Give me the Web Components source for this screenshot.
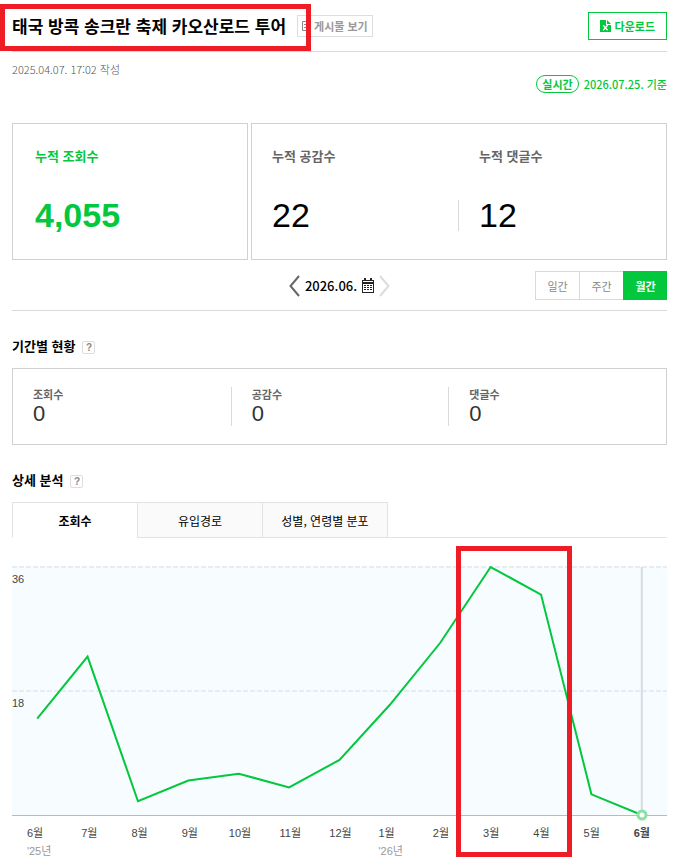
<!DOCTYPE html>
<html lang="ko">
<head>
<meta charset="utf-8">
<meta name="viewport" content="width=device-width, initial-scale=1">
<title>게시물 통계</title>
<style>
  body {
    margin: 0;
    background: #ffffff;
    color: #000000;
    font-family: "Noto Sans CJK KR", sans-serif;
    font-size: 12px;
    --green: #03c73c;
    --line: #d9d9d9;
    --mark: #ee1c25;
  }
</style>
</head>
<body>
<post-stats></post-stats>

<script>
// Base class: clones the markup into an open shadow root
class BaseElement extends HTMLElement {
  constructor() {
    super();
    this._sR = this.attachShadow({ mode: 'open' });
    const template = document.createElement('template');
    template.innerHTML = this.constructor.markup;
    this._sR.appendChild(template.content.cloneNode(true));
  }
}

class PostHeader extends BaseElement {
  static markup = `
    <style>
      :host {
        display: flex;
        align-items: center;
        height: 51px;
        border-bottom: 1px solid var(--line);
      }

      .title {
        position: relative;
        margin: 0;
        font-size: 17px;
        line-height: 28px;
        white-space: nowrap;
      }

      .mark {
        position: absolute;
        inset: -8px -25px -11px -12px;
        border: 5px solid var(--mark);
        pointer-events: none;
        z-index: 1;
      }

      .view {
        display: flex;
        align-items: center;
        gap: 3px;
        height: 20px;
        margin-left: 11px;
        padding: 0 4px;
        border: 1px solid #dddddd;
        color: #999999;
        font-size: 11px;
        font-weight: bold;
        text-decoration: none;
        white-space: nowrap;
      }

      .download {
        display: flex;
        align-items: center;
        gap: 4px;
        height: 28px;
        margin: 0 0 0 auto;
        padding: 0 11px;
        border: 1px solid var(--green);
        background: #ffffff;
        color: var(--green);
        font: bold 11px "Noto Sans CJK KR", sans-serif;
      }
    </style>
    <h1 class="title"><slot></slot><span class="mark"></span></h1>
    <a class="view" href="#">
      <svg width="9" height="10" viewBox="0 0 9 10" fill="none" stroke="#888888">
        <path d="M.5.5h8v9h-8zM2 3.5h5M2 6.5h5"/>
      </svg>
      게시물 보기
    </a>
    <button class="download" type="button">
      <svg width="11" height="12" viewBox="0 0 11 12">
        <path fill="#03c73c" d="M0 0h6v5h5v7H0z"/>
        <path fill="#03c73c" d="M7 0l4 4H7z"/>
        <path fill="none" stroke="#ffffff" stroke-width="1.3" d="M3.2 5.2l4.4 5M7.6 5.2l-4.4 5"/>
      </svg>
      다운로드
    </button>
  `;
}

class PostMeta extends BaseElement {
  static markup = `
    <style>
      :host {
        display: flex;
        justify-content: space-between;
        padding-top: 8px;
        font-size: 11px;
        line-height: 18px;
      }

      .written {
        color: #555555;
        font-weight: 300;
      }

      .live {
        display: flex;
        align-items: center;
        gap: 5px;
        margin-top: 15px;
        color: var(--green);
        font-weight: 500;
      }

      .badge {
        padding: 0 5px;
        border: 1px solid var(--green);
        border-radius: 9px;
        font-weight: bold;
        line-height: 16px;
      }
    </style>
    <span class="written"><slot name="written"></slot></span>
    <span class="live"><span class="badge">실시간</span><slot name="base"></slot></span>
  `;
}

class StatCard extends BaseElement {
  static markup = `
    <style>
      :host {
        display: grid;
        grid-auto-flow: column;
        grid-auto-columns: minmax(0, 1fr);
        padding: 22px 0 28px;
        border: 1px solid #d0d0d0;
      }
    </style>
    <slot></slot>
  `;
}

class StatItem extends BaseElement {
  static markup = `
    <style>
      :host {
        display: block;
        color: #000000;
      }

      .label {
        padding-left: 20px;
        color: #666666;
        font-size: 13px;
        font-weight: bold;
        line-height: 20px;
      }

      .value {
        margin-top: 34px;
        padding-left: 20px;
        font-family: "Liberation Sans", Arial, sans-serif;
        font-size: 34px;
        line-height: 31px;
      }

      :host([main]) .label,
      :host([main]) .value {
        padding-left: 22px;
        color: var(--green);
      }

      :host([main]) .value {
        font-weight: bold;
      }

      :host([divided]) .value {
        margin-left: -1px;
        border-left: 1px solid var(--line);
      }
    </style>
    <div class="label"></div>
    <div class="value"><slot></slot></div>
  `;

  connectedCallback() {
    this._sR.querySelector('.label').textContent = this.getAttribute('label');
  }
}

class PeriodBar extends BaseElement {
  static markup = `
    <style>
      :host {
        display: grid;
        grid-template-columns: 1fr auto 1fr;
        align-items: center;
        padding: 11px 0 10px;
        border-bottom: 1px solid var(--line);
      }

      button {
        margin: 0;
        padding: 0;
        border: 0;
        background: none;
        font: 11px "Noto Sans CJK KR", sans-serif;
      }

      svg {
        display: block;
      }

      .nav {
        display: flex;
        grid-column: 2;
        align-items: center;
        gap: 5px;
        font-size: 13px;
        font-weight: 500;
      }

      .units {
        display: flex;
        justify-self: end;
      }

      .units button {
        width: 44px;
        height: 29px;
        border: 1px solid var(--line);
        border-right: 0;
        color: #888888;
      }

      .units button.selected {
        border-color: var(--green);
        background: var(--green);
        color: #ffffff;
        font-weight: bold;
      }
    </style>
    <div class="nav">
      <button type="button" aria-label="이전">
        <svg width="11" height="22" viewBox="0 0 11 22" fill="none" stroke="#666666" stroke-width="2"><path d="M10 1L1.500 11 10 21"/></svg>
      </button>
      <span><slot></slot></span>
      <button type="button" aria-label="날짜 선택">
        <svg width="12" height="15" viewBox="0 0 12 15" shape-rendering="crispEdges">
          <path fill="#222222" d="M0 2h12v13H0zM2 0h2v2H2zM8 0h2v2H8z"/>
          <path fill="#ffffff" d="M1 3h10v1H1zM1 6h10v8H1z"/>
          <path fill="#222222" d="M2 7h2v1H2zM5 7h2v1H5zM8 7h2v1H8zM2 9h2v1H2zM5 9h2v1H5zM8 9h2v1H8zM2 11h2v1H2zM5 11h2v1H5zM8 11h2v1H8z"/>
        </svg>
      </button>
      <button type="button" aria-label="다음">
        <svg width="11" height="22" viewBox="0 0 11 22" fill="none" stroke="#dddddd" stroke-width="2"><path d="M1 1l8.500 10L1 21"/></svg>
      </button>
    </div>
    <div class="units">
      <button type="button">일간</button>
      <button type="button">주간</button>
      <button type="button" class="selected">월간</button>
    </div>
  `;

  constructor() {
    super();
    this.$units = this._sR.querySelectorAll('.units button');
    this.$units.forEach($unit => {
      $unit.addEventListener('click', () => {
        this.$units.forEach($u => $u.classList.toggle('selected', $u === $unit));
      });
    });
  }
}

class SectionTitle extends BaseElement {
  static markup = `
    <style>
      :host {
        display: flex;
        align-items: center;
        gap: 7px;
        margin: 25px 0 12px;
      }

      h2 {
        margin: 0;
        font-size: 13px;
        line-height: 20px;
      }

      button {
        width: 13px;
        height: 13px;
        margin: 3px 0 0;
        padding: 0;
        border: 1px solid #dddddd;
        border-radius: 2px;
        background: #ffffff;
        color: #888888;
        font: bold 10px/11px "Liberation Sans", Arial, sans-serif;
      }
    </style>
    <h2><slot></slot></h2>
    <button type="button">?</button>
  `;
}

class PeriodSummary extends BaseElement {
  static markup = `
    <style>
      :host {
        display: grid;
        grid-template-columns: repeat(3, 1fr);
        padding: 18px 0;
        border: 1px solid #d0d0d0;
      }

      .item {
        height: 39px;
        padding-left: 20px;
      }

      .item + .item {
        border-left: 1px solid var(--line);
      }

      .label {
        color: #666666;
        font-size: 11px;
        font-weight: bold;
        line-height: 14px;
      }

      .value {
        color: #333333;
        font-family: "Liberation Sans", Arial, sans-serif;
        font-size: 22px;
        line-height: 26px;
      }
    </style>
  `;

  connectedCallback() {
    this.getAttribute('items').split(',').forEach(item => {
      const [label, value] = item.split(':');
      const $item = document.createElement('div');
      $item.className = 'item';
      $item.innerHTML = `<div class="label">${label}</div><div class="value">${value}</div>`;
      this._sR.appendChild($item);
    });
  }
}

class DetailTabs extends BaseElement {
  static markup = `
    <style>
      :host {
        display: flex;
        border-bottom: 1px solid #e3e3e3;
      }

      button {
        width: 125px;
        height: 36px;
        margin: 0 0 -1px;
        padding: 0;
        border: 1px solid #e3e3e3;
        border-right: 0;
        background: #fafafa;
        color: #000000;
        font: 12px "Noto Sans CJK KR", sans-serif;
      }

      button:last-child {
        width: 126px;
        border-right: 1px solid #e3e3e3;
      }

      button.selected {
        border-bottom-color: #ffffff;
        background: #ffffff;
        font-weight: bold;
      }
    </style>
    <button type="button" class="selected">조회수</button>
    <button type="button">유입경로</button>
    <button type="button">성별, 연령별 분포</button>
  `;

  constructor() {
    super();
    this.$tabs = this._sR.querySelectorAll('button');
    this.$tabs.forEach($tab => {
      $tab.addEventListener('click', () => {
        this.$tabs.forEach($t => $t.classList.toggle('selected', $t === $tab));
      });
    });
  }
}

class ViewsChart extends BaseElement {
  static markup = `
    <style>
      :host {
        display: block;
        position: relative;
        padding: 29px 0 5px;
      }

      .plot {
        position: relative;
        height: 248px;
        border-bottom: 1px solid #bbbbbb;
        background: #f6fcff;
      }

      svg {
        display: block;
        width: 100%;
        height: 100%;
        overflow: visible;
      }

      .scale {
        position: absolute;
        inset: 0;
        display: grid;
        grid-template-rows: 1fr 1fr;
        color: #444444;
        font: 11px/24px "Liberation Sans", Arial, sans-serif;
      }

      .dot {
        position: absolute;
        right: calc(100% / 26);
        bottom: 0;
        width: 5px;
        height: 5px;
        border: 3px solid #8be0a4;
        border-radius: 50%;
        background: #ffffff;
        transform: translate(50%, 50%);
      }

      .axis {
        display: grid;
        grid-template-columns: repeat(13, 1fr);
        justify-items: center;
        height: 36px;
        padding: 8px 0 0 2px;
        color: #444444;
        font: 11px/18px "Liberation Sans", "Noto Sans CJK KR", sans-serif;
      }

      .year {
        color: #999999;
      }

      .axis > :last-child {
        font-weight: bold;
      }

      /* Frame around the 10th and 11th months */
      .mark {
        position: absolute;
        top: 8px;
        bottom: 8px;
        left: calc(100% * 9 / 13 - 9px);
        width: calc(100% * 2 / 13 + 15px);
        box-sizing: border-box;
        border: 5px solid var(--mark);
        pointer-events: none;
      }
    </style>
    <div class="plot">
      <svg viewBox="0 0 1300 360" preserveAspectRatio="none" fill="none">
        <path d="M0 0H1300M0 180H1300" stroke="#e4edf1" stroke-width="2" stroke-dasharray="5 2" vector-effect="non-scaling-stroke"/>
        <path d="M1250 0V360" stroke="#d5dde1" stroke-width="2" vector-effect="non-scaling-stroke"/>
        <polyline stroke="#03c73c" stroke-width="2" vector-effect="non-scaling-stroke"/>
      </svg>
      <div class="scale"><span>36</span><span>18</span></div>
      <span class="dot"></span>
    </div>
    <div class="axis"></div>
    <span class="mark"></span>
  `;

  connectedCallback() {
    const views = JSON.parse(this.getAttribute('views'));
    const points = views.map((v, i) => `${i * 100 + 50},${360 - v * 10}`);
    this._sR.querySelector('polyline').setAttribute('points', points.join(' '));

    // A label can carry its year: "6월/'25년"
    const $axis = this._sR.querySelector('.axis');
    this.getAttribute('months').split(' ').forEach(label => {
      const [month, year] = label.split('/');
      const $month = document.createElement('div');
      $month.textContent = month;
      if (year) {
        const $year = document.createElement('div');
        $year.className = 'year';
        $year.textContent = year;
        $month.appendChild($year);
      }
      $axis.appendChild($month);
    });
  }
}

class PostStats extends BaseElement {
  static markup = `
    <style>
      :host {
        display: block;
        padding: 0 9px 0 12px;
      }

      .totals {
        display: grid;
        grid-template-columns: 236fr 416fr;
        gap: 3px;
        margin-top: 30px;
      }
    </style>
    <post-header>태국 방콕 송크란 축제 카오산로드 투어</post-header>
    <post-meta>
      <span slot="written">2025.04.07. 17:02 작성</span>
      <span slot="base">2026.07.25. 기준</span>
    </post-meta>
    <div class="totals">
      <stat-card><stat-item main label="누적 조회수">4,055</stat-item></stat-card>
      <stat-card>
        <stat-item label="누적 공감수">22</stat-item>
        <stat-item divided label="누적 댓글수">12</stat-item>
      </stat-card>
    </div>
    <period-bar>2026.06.</period-bar>
    <section-title>기간별 현황</section-title>
    <period-summary items="조회수:0,공감수:0,댓글수:0"></period-summary>
    <section-title>상세 분석</section-title>
    <detail-tabs></detail-tabs>
    <views-chart
      views="[14,23,2,5,6,4,8,16,25,36,32,3,0]"
      months="6월/'25년 7월 8월 9월 10월 11월 12월 1월/'26년 2월 3월 4월 5월 6월"></views-chart>
  `;
}

window.customElements.define('post-header', PostHeader);
window.customElements.define('post-meta', PostMeta);
window.customElements.define('stat-card', StatCard);
window.customElements.define('stat-item', StatItem);
window.customElements.define('period-bar', PeriodBar);
window.customElements.define('section-title', SectionTitle);
window.customElements.define('period-summary', PeriodSummary);
window.customElements.define('detail-tabs', DetailTabs);
window.customElements.define('views-chart', ViewsChart);
window.customElements.define('post-stats', PostStats);
</script>
</body>
</html>
